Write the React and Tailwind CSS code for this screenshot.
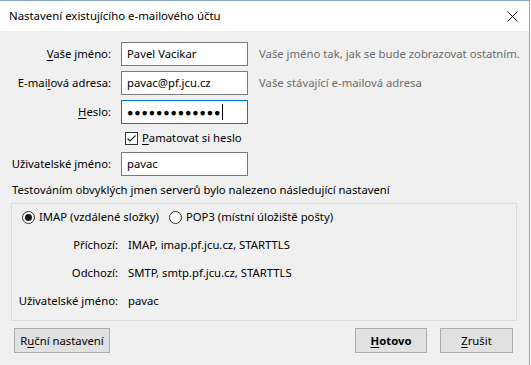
import React from 'react';

const font = { fontFamily: '"Segoe UI", "Noto Sans", sans-serif' };

const U = ({ children }) => <span className="underline underline-offset-2">{children}</span>;

const Field = ({ label, value, focused, hint, children }) => (
  <div className="flex items-center h-[24px]">
    <div className="w-[112px] text-right pr-[1px]">{label}</div>
    <div
      className={`ml-[9px] w-[127px] h-[24px] bg-white flex items-center pl-[5px] border ${
        focused ? 'border-[#0078d7]' : 'border-[#7a7a7a]'
      }`}
    >
      {children || value}
    </div>
    {hint && <div className="ml-[11px] text-[#6d6d6d]">{hint}</div>}
  </div>
);

const Radio = ({ checked, label }) => (
  <div className="flex items-center gap-[4px]">
    <span className="w-[13px] h-[13px] rounded-full border border-[#333] bg-white flex items-center justify-center">
      {checked && <span className="w-[7px] h-[7px] rounded-full bg-[#1a1a1a]" />}
    </span>
    <span>{label}</span>
  </div>
);

const Btn = ({ children, className = '' }) => (
  <button className={`h-[25px] bg-[#e1e1e1] border border-[#adadad] flex items-center justify-center ${className}`}>
    {children}
  </button>
);

export default function App() {
  return (
    <div className="w-[531px] h-[365px] bg-white overflow-hidden text-[11.3px] text-black leading-none" style={font}>
      <div className="w-[530px] h-full border-t border-r border-[#8aa4c8] flex flex-col">
        {/* title bar */}
        <div className="h-[30px] bg-white flex items-center justify-between pl-[9px] pr-[11px] shrink-0">
          <span className="text-[11.4px]">Nastavení existujícího e-mailového účtu</span>
          <svg width="11" height="11" viewBox="0 0 11 11">
            <path d="M0.5 0.5L10.5 10.5M10.5 0.5L0.5 10.5" stroke="#111" strokeWidth="1" />
          </svg>
        </div>

        <div className="flex-1 bg-[#f0f0f0] pt-[11px]">
          <div className="flex flex-col gap-[5px]">
            <Field label={<><U>V</U>aše jméno:</>} value="Pavel Vacikar" hint="Vaše jméno tak, jak se bude zobrazovat ostatním." />
            <Field label={<>E-mai<U>l</U>ová adresa:</>} value="pavac@pf.jcu.cz" hint="Vaše stávající e-mailová adresa" />
            <Field label={<><U>H</U>eslo:</>} focused>
              <span className="text-[10.5px] tracking-[0.9px] font-bold">●●●●●●●●●●●●●</span>
              <span className="w-[1px] h-[16px] bg-black ml-[1px]" />
            </Field>
          </div>

          <div className="h-[28px] flex items-center pl-[125px] gap-[4px]">
            <span className="w-[13px] h-[13px] border border-[#333] bg-white flex items-center justify-center">
              <svg width="11" height="11" viewBox="0 0 11 11">
                <path d="M1.5 5.5L4 8L9.5 2.5" stroke="#222" strokeWidth="1.1" fill="none" />
              </svg>
            </span>
            <span><U>P</U>amatovat si heslo</span>
          </div>

          <Field label="Uživatelské jméno:" value="pavac" />

          <div className="pl-[12px] mt-[7px] h-[14px] flex items-center">
            Testováním obvyklých jmen serverů bylo nalezeno následující nastavení
          </div>

          <div className="ml-[11px] mt-[6px] w-[506px] h-[118px] border border-[#dcdcdc] flex flex-col">
            <div className="flex items-center gap-[10px] pl-[10px] h-[26px]">
              <Radio checked label="IMAP (vzdálené složky)" />
              <Radio label="POP3 (místní úložiště pošty)" />
            </div>
            <div className="grid grid-cols-[106px_1fr] gap-x-[10px] auto-rows-[28px] items-center mt-[1px]">
              <div className="text-right">Příchozí:</div>
              <div>IMAP, imap.pf.jcu.cz, STARTTLS</div>
              <div className="text-right">Odchozí:</div>
              <div>SMTP, smtp.pf.jcu.cz, STARTTLS</div>
              <div className="text-right">Uživatelské jméno:</div>
              <div>pavac</div>
            </div>
          </div>

          <div className="flex items-center mt-[7px] pl-[14px] pr-[16px]">
            <Btn className="w-[96px]">R<U>u</U>ční nastavení</Btn>
            <div className="flex-1" />
            <Btn className="w-[72px] font-bold"><U>H</U>otovo</Btn>
            <Btn className="w-[73px] ml-[13px]"><U>Z</U>rušit</Btn>
          </div>
        </div>
      </div>
    </div>
  );
}
